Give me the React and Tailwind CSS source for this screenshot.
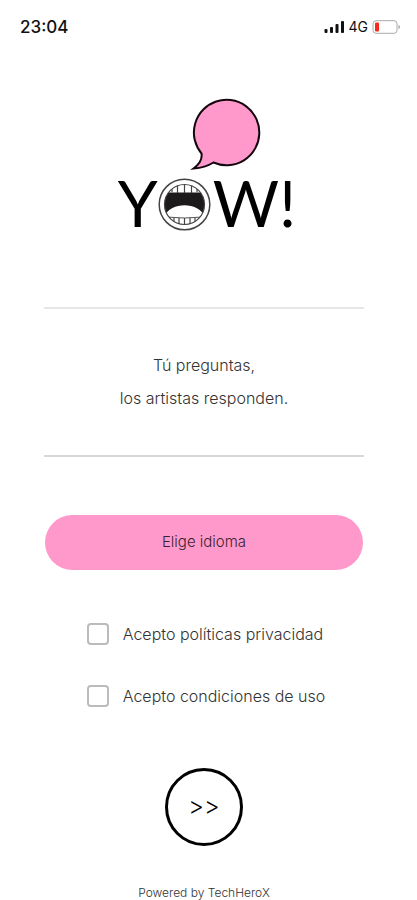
import { useState } from "react";

const terms = [
  { id: "privacy", label: "Acepto políticas privacidad" },
  { id: "conditions", label: "Acepto condiciones de uso" },
];

const StatusBar = () => (
  <header className="flex items-center justify-between pt-[15px] pl-5 pr-4 font-['Inter',sans-serif] text-[#111]">
    <span className="text-[17px] leading-6 font-medium">23:04</span>
    <div className="flex items-center gap-1">
      <svg width="21" height="12" viewBox="0 0 21 12" fill="#111" aria-hidden="true">
        <rect x="0.5" y="8" width="3" height="4" rx="1" />
        <rect x="6" y="6" width="3" height="6" rx="1" />
        <rect x="11.500" y="3" width="3" height="9" rx="1" />
        <rect x="17" y="0" width="3" height="12" rx="1" />
      </svg>
      <span className="text-sm leading-6 font-normal">4G</span>
      <svg width="29" height="14" viewBox="0 0 29 14" aria-hidden="true">
        <rect x="1" y="0.700" width="24" height="12.600" rx="3" fill="#fff" stroke="#aaa" />
        <rect x="3" y="2.500" width="4" height="9" rx="1" fill="#f8291f" />
        <path d="M26.500 5v4c1.800-.5 1.800-3.500 0-4z" fill="#999" />
      </svg>
    </div>
  </header>
);

const Bubble = () => (
  <svg className="ml-11" width="72" height="72" viewBox="0 0 72 72" aria-hidden="true">
    <path
      d="M11.500 55.500A32.700 32.700 0 1 1 23.500 64.500C17 68.500 10 70 3.500 70.500C9 66.500 12.500 61.500 11.500 55.500Z"
      fill="#ff99cb"
      stroke="#15070f"
      strokeWidth="2"
      strokeLinejoin="miter"
    />
  </svg>
);

const Mouth = () => (
  <svg width="53" height="53" viewBox="0 0 53 53" role="img" aria-label="O">
    <defs>
      <clipPath id="mouth">
        <circle cx="26.500" cy="26.500" r="20" />
      </clipPath>
    </defs>
    <circle cx="26.500" cy="26.500" r="25.300" fill="#fff" stroke="#444" strokeWidth="1.500" />
    <g clipPath="url(#mouth)">
      <rect width="53" height="53" fill="#fff" />
      <path d="M0 14.500H53V38H46C41 23.500 12 23.500 7 38H0Z" fill="#1c1a1b" />
      <path d="M8 39Q26.500 41 45 39" fill="none" stroke="#555" />
      <path
        d="M14 6v8M19.500 5v10M26.500 5v10M33.500 5v10M39 6v8M16 40v6M21 40v8M26.500 40v8M32 40v8M37 40v6"
        stroke="#444"
        strokeWidth="1.200"
      />
    </g>
    <circle cx="26.500" cy="26.500" r="20" fill="none" stroke="#444" strokeWidth="1.200" />
  </svg>
);

const Logo = () => (
  <h1 className="mt-[59px] flex flex-col items-center">
    <Bubble />
    <span className="mt-2 flex items-start pl-1.5 font-['Lato',sans-serif] text-[64px] leading-[50px] font-normal text-black">
      <span>Y</span>
      <Mouth />
      <span className="pl-0.5">W!</span>
    </span>
  </h1>
);

export default function App() {
  const [accepted, setAccepted] = useState({});

  const toggle = (id) => setAccepted((prev) => ({ ...prev, [id]: !prev[id] }));

  return (
    <div className="min-h-screen bg-white font-['Inter',sans-serif] font-light text-[#333]">
      <StatusBar />

      <main className="flex flex-col items-center pl-11 pr-[53px]">
        <Logo />

        <section className="mt-19 w-full border-y-2 border-t-[#e6e6e6] border-b-[#d8d8d8] py-10 text-center text-base leading-[33px]">
          <p>Tú preguntas,</p>
          <p>los artistas responden.</p>
        </section>

        <div className="mt-[58px] w-full px-px">
          <button
            type="button"
            className="h-[55px] w-full rounded-full bg-[#ff99cb] text-[15px] text-[#3a1f2d]"
          >
            Elige idioma
          </button>
        </div>

        <div className="mt-13 flex flex-col gap-[38px] pl-1">
          {terms.map((term) => (
            <label key={term.id} htmlFor={term.id} className="flex items-center gap-3.5 text-base leading-6">
              <input
                id={term.id}
                type="checkbox"
                checked={!!accepted[term.id]}
                onChange={() => toggle(term.id)}
                className="size-[22px] appearance-none rounded-sm border-2 border-[#bbb] bg-white checked:bg-[#ff99cb]"
              />
              {term.label}
            </label>
          ))}
        </div>

        <button
          type="button"
          aria-label="Continuar"
          className="mt-15 size-[78px] rounded-full border-3 border-black text-2xl text-black"
        >
          &gt;&gt;
        </button>

        <footer className="mt-10 text-xs leading-[14px]">Powered by TechHeroX</footer>
      </main>
    </div>
  );
}
